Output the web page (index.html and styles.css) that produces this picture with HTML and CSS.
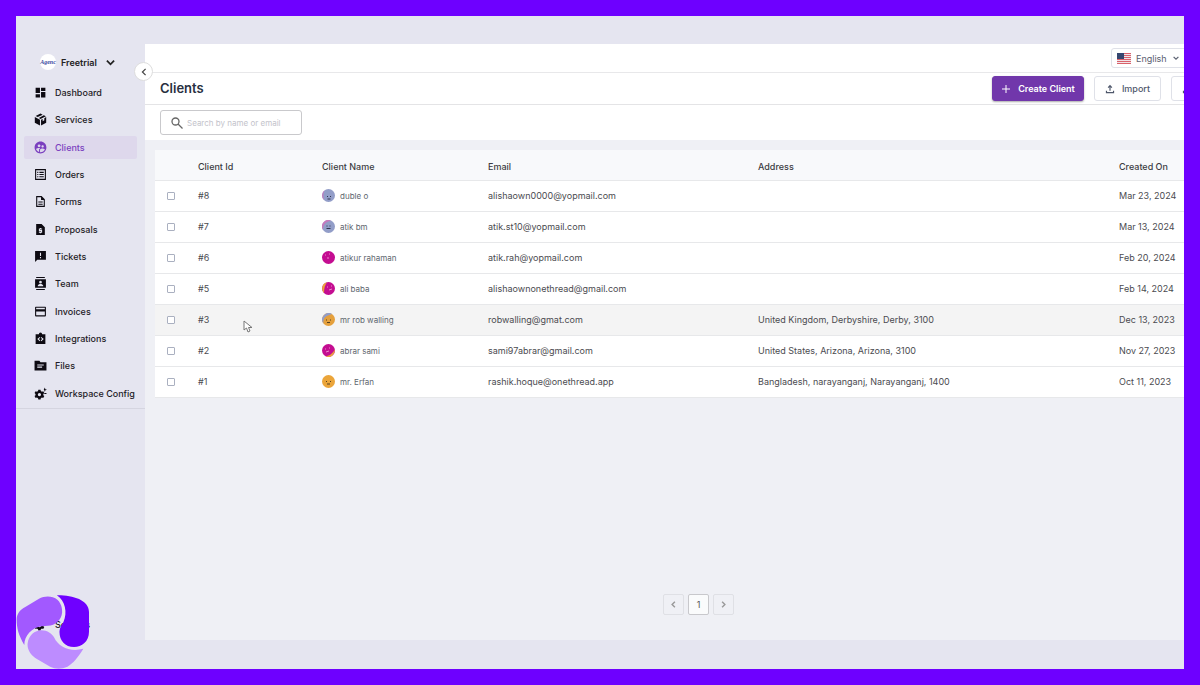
FILE: index.html
```html
<!DOCTYPE html>
<html lang="en">
<head>
<meta charset="utf-8">
<title>Clients</title>
<link rel="stylesheet" href="styles.css">
</head>
<body>
<svg class="defs" aria-hidden="true">
  <symbol id="upload" viewBox="0 0 24 24"><path d="M12 16V4m-4.500 4.500L12 4l4.500 4.500M3.500 16v4.500h17V16" fill="none" stroke="currentColor" stroke-width="2.800"/></symbol>
  <symbol id="gear" viewBox="0 0 24 24"><path fill-rule="evenodd" d="M8 5h4l.6 2.500 2 1.100 2.400-.8 2 3.400-1.800 1.800v2l1.800 1.800-2 3.400-2.400-.7-2 1.100L12 23H8l-.6-2.400-2-1.100-2.400.7-2-3.400L2.800 15v-2L1 11.200l2-3.400 2.400.8 2-1.100zM10 11a3 3 0 100 6 3 3 0 000-6z"/></symbol>
</svg>
<div class="app">
  <aside class="sidebar">
    <button class="workspace" type="button">
      <span class="brand">Agenc</span>
      <span>Freetrial</span>
      <svg class="caret" viewBox="0 0 10 10"><path d="M1 3l4 4 4-4"/></svg>
    </button>
    <nav class="nav">
      <a href="#"><svg viewBox="0 0 24 24"><path d="M3 3h8v10H3zM13 3h8v6h-8zM13 11h8v10h-8zM3 15h8v6H3z"/></svg>Dashboard</a>
      <a href="#"><svg viewBox="0 0 24 24"><path d="M12 1l4 2-9 4.500L3 5.500zM18 4l4 2-10 5-3-1.700zM1.500 7.500L11 12.500V23L1.500 18zM22.500 7.500V18L13 23V12.500l3-1.500v4l3-1.500v-4z"/></svg>Services</a>
      <a href="#" class="active" aria-current="page"><svg viewBox="1 1 22 22"><path d="M11.990 2c-5.520 0-10 4.480-10 10s4.480 10 10 10 10-4.480 10-10-4.480-10-10-10zm3.610 6.340c1.070 0 1.930.86 1.930 1.930s-.86 1.930-1.930 1.930-1.930-.86-1.930-1.930c-.01-1.070.86-1.930 1.930-1.930zm-6-1.580c1.300 0 2.360 1.060 2.360 2.360s-1.060 2.360-2.360 2.360-2.360-1.060-2.360-2.360c0-1.310 1.050-2.360 2.360-2.360zm0 9.130v3.750c-2.400-.75-4.300-2.600-5.140-4.960 1.050-1.120 3.670-1.690 5.140-1.690.53 0 1.200.08 1.900.22-1.640.87-1.900 2.020-1.900 2.680zM11.990 20c-.27 0-.53-.01-.79-.04v-4.070c0-1.420 2.940-2.130 4.400-2.130 1.070 0 2.920.39 3.840 1.150-1.170 2.970-4.060 5.090-7.450 5.090z"/></svg>Clients</a>
      <a href="#"><svg viewBox="0 0 24 24"><path fill-rule="evenodd" d="M2 2h20v20H2zm2 2v16h16V4z"/><path d="M6 7h2v2H6zm0 4h2v2H6zm0 4h2v2H6zM10 7h8v2h-8zm0 4h8v2h-8zm0 4h8v2h-8z"/></svg>Orders</a>
      <a href="#"><svg viewBox="0 0 24 24"><path fill-rule="evenodd" d="M4 2h10l6 6v14H4zm2 2v16h12V9h-5V4zm2 8h8v2H8zm0 4h8v2H8z"/></svg>Forms</a>
      <a href="#"><svg viewBox="0 0 24 24"><path fill-rule="evenodd" d="M4 2h10l6 6v14H4zm7 7v1H9v5h4v1H9v2h2v1h2v-1h2v-5h-4v-1h4v-2h-2V9z"/></svg>Proposals</a>
      <a href="#"><svg viewBox="0 0 24 24"><path fill-rule="evenodd" d="M2 2h20v16H6l-4 4zm9 3v6h2V5zm0 8v2h2v-2z"/></svg>Tickets</a>
      <a href="#"><svg viewBox="0 0 24 24"><path fill-rule="evenodd" d="M4 0h16v2H4zm-2 4h20v16H2zm10 3a2.500 2.500 0 100 5 2.500 2.500 0 000-5zm-5 10h10v-1c0-2-3-3-5-3s-5 1-5 3zM4 22h16v2H4z"/></svg>Team</a>
      <a href="#"><svg viewBox="0 0 24 24"><path fill-rule="evenodd" d="M3 3h18l1 1v16l-1 1H3l-1-1V4zm1 2v3h16V5zm0 7v7h16v-7z"/></svg>Invoices</a>
      <a href="#"><svg viewBox="0 0 24 24"><path fill-rule="evenodd" d="M3 4h6a3 3 0 016 0h6v18H3zm7.500 5L6 13l4.500 4 1-1.500L9 13l2.500-2.500zm3 0l-1 1.500L15 13l-2.500 2.500 1 1.500L18 13z"/></svg>Integrations</a>
      <a href="#"><svg viewBox="0 0 24 24"><path fill-rule="evenodd" d="M1 3h9l2 3h11v15H1zm5 7v2h12v-2zm0 4v2h9v-2z"/></svg>Files</a>
      <a href="#"><svg viewBox="0 0 24 24"><use href="#gear"/><path d="M18 5l2-4 1 3 3 1-3 1-1 3-1-3zM19 11h4v2h-4z"/></svg>Workspace Config</a>
    </nav>
    <a class="settings" href="#"><svg viewBox="0 0 24 24"><use href="#gear"/></svg>Settings</a>
    <button class="collapse" type="button" aria-label="Collapse sidebar"><svg viewBox="0 0 10 10"><path d="M7 1L3 5l4 4"/></svg></button>
    <svg class="swirl" viewBox="49 44 219 223" aria-hidden="true">
      <path fill="#6f00ff" d="M170 45C215 44 267 58 267 95V155C267 185 245 201 222 201C195 201 178 182 178 155C178 143 184 135 190 125C203 98 195 60 170 45Z"/>
      <path fill="#a259ff" d="M72 195C55 165 49 145 49 118C49 100 60 88 75 80L115 56C130 48 145 47 158 51C180 58 187 80 186 97C184 120 165 136 143 137L125 138C95 142 72 165 72 195Z"/>
      <path fill="#bd8cff" d="M82 190C85 165 103 150 124 150C142 150 155 160 162 172C175 200 210 217 250 206C235 230 220 250 202 260C185 268 165 268 150 260L110 237C93 227 80 210 82 190Z"/>
    </svg>
  </aside>
  <main class="main">
    <div class="topbar">
      <div class="language">
        <svg class="flag" viewBox="0 0 14 11"><path fill="#f1e4e8" d="M0 0h14v11H0z"/><path stroke="#d9616b" d="M0 .5h14M0 2.500h14M0 4.500h14M0 6.500h14M0 8.500h14M0 10.500h14"/><path fill="#35466f" d="M0 0h7v6H0z"/></svg>
        <select aria-label="Language"><option>English</option></select>
        <svg class="caret" viewBox="0 0 10 10"><path d="M1 3l4 4 4-4"/></svg>
      </div>
    </div>
    <header class="titlebar">
      <h1>Clients</h1>
      <div class="actions">
        <button class="btn primary" type="button"><svg viewBox="0 0 10 10"><path d="M5 1v8M1 5h8" stroke="currentColor"/></svg>Create Client</button>
        <button class="btn" type="button"><svg viewBox="0 0 24 24"><use href="#upload"/></svg>Import</button>
        <button class="btn export" type="button" aria-label="Export"><svg viewBox="0 0 24 24"><use href="#upload"/></svg></button>
      </div>
    </header>
    <div class="searchbar">
      <label class="search">
        <svg viewBox="0 0 12 12"><circle cx="4.500" cy="4.500" r="3.500"/><path d="M7 7l4.500 4.500"/></svg>
        <input type="search" placeholder="Search by name or email" aria-label="Search by name or email">
      </label>
    </div>
    <div class="content">
      <table>
        <colgroup><col class="c-check"><col class="c-id"><col class="c-name"><col class="c-email"><col class="c-address"><col></colgroup>
        <thead><tr><th></th><th>Client Id</th><th>Client Name</th><th>Email</th><th>Address</th><th>Created On</th></tr></thead>
        <tbody>
          <tr><td><input type="checkbox" aria-label="Select #8"></td><td>#8</td><td><span class="person"><svg viewBox="0 0 13 13"><circle cx="6.500" cy="6.500" r="6.500" fill="#929dc8"/><path fill="#c579bd" d="M3 1a6.500 6.500 0 00-1 10C1 7 1 4 3 1z"/><path stroke="#303650" d="M5 7.500h1M8 7.500h1M5.500 10h3"/></svg>duble o</span></td><td>alishaown0000@yopmail.com</td><td></td><td>Mar 23, 2024</td></tr>
          <tr><td><input type="checkbox" aria-label="Select #7"></td><td>#7</td><td><span class="person"><svg viewBox="0 0 13 13"><circle cx="6.500" cy="6.500" r="6.500" fill="#929dc8"/><path fill="#c579bd" d="M9 .5A6.500 6.500 0 001 10C1 5 3 2 9 .5z"/><path stroke="#303650" d="M4.500 6h1M7.500 6h1M4.500 8.500h4"/></svg>atik bm</span></td><td>atik.st10@yopmail.com</td><td></td><td>Mar 13, 2024</td></tr>
          <tr><td><input type="checkbox" aria-label="Select #6"></td><td>#6</td><td><span class="person"><svg viewBox="0 0 13 13"><circle cx="6.500" cy="6.500" r="6.500" fill="#c40d91"/><path stroke="#ed8acb" d="M3 4h1M7 3h1M5 7h2"/></svg>atikur rahaman</span></td><td>atik.rah@yopmail.com</td><td></td><td>Feb 20, 2024</td></tr>
          <tr><td><input type="checkbox" aria-label="Select #5"></td><td>#5</td><td><span class="person"><svg viewBox="0 0 13 13"><circle cx="6.500" cy="6.500" r="6.500" fill="#c40d91"/><path fill="#eba53a" d="M5 .2A6.500 6.500 0 002 11C2 6 3 3 5 .2z"/><path stroke="#ed8acb" d="M5 5h1M9 4h1M7 8l3-1"/></svg>ali baba</span></td><td>alishaownonethread@gmail.com</td><td></td><td>Feb 14, 2024</td></tr>
          <tr class="hover"><td><input type="checkbox" aria-label="Select #3"></td><td>#3</td><td><span class="person"><svg viewBox="0 0 13 13"><circle cx="6.500" cy="6.500" r="6.500" fill="#e5a03c"/><path fill="#929dc8" d="M10 1A6.500 6.500 0 001.500 10.500C1 5 3 3 10 1z"/><path stroke="#56401f" d="M4 7h1M8 7h1M5 9.500h3"/></svg>mr rob walling</span></td><td>robwalling@gmat.com</td><td>United Kingdom, Derbyshire, Derby, 3100</td><td>Dec 13, 2023</td></tr>
          <tr><td><input type="checkbox" aria-label="Select #2"></td><td>#2</td><td><span class="person"><svg viewBox="0 0 13 13"><circle cx="6.500" cy="6.500" r="6.500" fill="#c40d91"/><path fill="#eba53a" d="M12.800 5.500A6.500 6.500 0 013.500 12.200C8 12 11 9 12.800 5.500z"/><path stroke="#ed8acb" d="M3 5h1M7 4h1M4 8l3-1"/></svg>abrar sami</span></td><td>sami97abrar@gmail.com</td><td>United States, Arizona, Arizona, 3100</td><td>Nov 27, 2023</td></tr>
          <tr><td><input type="checkbox" aria-label="Select #1"></td><td>#1</td><td><span class="person"><svg viewBox="0 0 13 13"><circle cx="6.500" cy="6.500" r="6.500" fill="#eba53a"/><path stroke="#56401f" d="M4 6.500h1M8 6.500h1M5 9h3"/></svg>mr. Erfan</span></td><td>rashik.hoque@onethread.app</td><td>Bangladesh, narayanganj, Narayanganj, 1400</td><td>Oct 11, 2023</td></tr>
        </tbody>
      </table>
      <nav class="pager" aria-label="Pages">
        <button type="button" aria-label="Previous page"><svg viewBox="0 0 10 10"><path d="M7 1L3 5l4 4"/></svg></button>
        <button type="button" class="current">1</button>
        <button type="button" aria-label="Next page"><svg viewBox="0 0 10 10"><path d="M3 1l4 4-4 4"/></svg></button>
      </nav>
      <svg class="cursor" viewBox="0 0 10 13" aria-hidden="true"><path d="M1 1v9l2.500-2 1.500 4 2-1-1.500-3.500H9z"/></svg>
    </div>
  </main>
</div>
</body>
</html>
```
FILE: styles.css
```css
* { box-sizing: border-box; }
body { margin: 0; font-family: Inter, "Liberation Sans", sans-serif; font-size: 9px; color: #4b4b50; }
button, input, select { font: inherit; color: inherit; margin: 0; }
svg { display: block; flex: none; }
a { color: inherit; text-decoration: none; }
.defs { position: absolute; width: 0; height: 0; }
.app { display: flex; min-height: 100vh; border: 16px solid #6e00ff; background: #e5e5f0; overflow: hidden; }

.sidebar { position: relative; flex: none; width: 129px; display: flex; flex-direction: column; padding-top: 38px; color: #1e1b26; }
.workspace { display: flex; align-items: center; height: 16px; margin-left: 24px; padding: 0; border: 0; background: none; font-weight: 600; color: #222; }
.brand { display: grid; place-items: center; width: 16px; height: 16px; margin-right: 5px; border-radius: 50%; background: #fff; font: italic 700 6px "Liberation Serif", serif; color: #3a4aa0; }
.caret { width: 9px; height: 9px; margin-left: 9px; }
.caret path, .collapse path, .pager path { fill: none; stroke: currentColor; stroke-width: 2; }
.nav { display: flex; flex-direction: column; gap: 4px; height: 339px; padding: 11px 0 3px 8px; border-bottom: 1px solid #d5d5e0; }
.nav a, .settings { display: flex; align-items: center; gap: 8px; padding-left: 10px; font-weight: 500; white-space: nowrap; }
.nav a { flex: 1; margin-right: 8px; border-radius: 2px; }
.nav svg, .settings svg { width: 13px; height: 13px; fill: #0d0a12; }
.nav .active { background: #ded8ec; color: #7b3fbf; }
.nav .active svg { fill: #7b3fbf; }
.settings { margin: auto 0 37px 8px; height: 16px; }
.collapse { position: absolute; right: -8px; top: 46px; z-index: 2; display: grid; place-items: center; width: 19px; height: 19px; padding: 0; border: 1px solid #ddd; border-radius: 50%; background: #fff; color: #444; }
.collapse svg { width: 8px; height: 8px; }
.collapse path { stroke-width: 1.5; }
.swirl { position: absolute; left: 0; bottom: 0; width: 74px; height: 74px; }

.main { flex: 1; min-width: 0; display: flex; flex-direction: column; margin: 28px 0 29px; background: #eff0f5; overflow: hidden; }
.topbar, .titlebar, .searchbar { flex: none; display: flex; align-items: center; background: #fff; }
.topbar { height: 29px; justify-content: flex-end; border-bottom: 1px solid #e8e8ea; }
.language { position: relative; display: flex; align-items: center; flex: none; width: 77px; height: 20px; margin-right: -4px; }
.flag { position: absolute; left: 6px; width: 14px; height: 11px; }
.language select { appearance: none; width: 100%; height: 20px; padding: 0 0 0 24px; border: 1px solid #dfe1e8; border-radius: 3px; background: #fff; color: #5a6070; }
.language .caret { position: absolute; right: 9px; width: 6px; height: 6px; color: #5a6070; }
.titlebar { height: 32px; padding-left: 15px; justify-content: space-between; border-bottom: 1px solid #e4e4e6; }
h1 { margin: 0; padding-bottom: 1px; font-size: 13px; font-weight: 600; color: #283040; }
.actions { display: flex; gap: 10px; margin-right: -13px; }
.btn { display: flex; align-items: center; justify-content: center; gap: 7px; width: 67px; height: 25px; padding: 0; border: 1px solid #dfe1e8; border-radius: 3px; background: #fff; font-weight: 500; color: #4f586b; }
.btn svg { width: 10px; height: 10px; }
.export { justify-content: flex-start; width: 26px; padding-left: 10px; }
.primary { width: 92px; border-color: #7137ab; background: #7137ab; color: #fff; font-weight: 600; box-shadow: 0 1px 2px #0005; }
.searchbar { height: 35px; padding-left: 15px; }
.search { display: flex; align-items: center; gap: 4px; width: 142px; height: 25px; padding-left: 10px; border: 1px solid #c9c9cc; border-radius: 3px; }
.search svg { width: 12px; height: 12px; fill: none; stroke: #666; stroke-width: 1.300; }
.search input { flex: 1; min-width: 0; padding: 0; border: 0; outline: 0; background: none; font-size: 8px; }
.search input::placeholder { color: #c3c3cb; }

.content { position: relative; flex: 1; display: flex; flex-direction: column; padding: 10px 0 25px 10px; }
table { width: 100%; table-layout: fixed; border-collapse: collapse; background: #fff; }
.c-check { width: 43px; } .c-id { width: 124px; } .c-name { width: 166px; } .c-email { width: 270px; } .c-address { width: 361px; }
tr { height: 31px; border-bottom: 1px solid #e7e8ea; }
thead tr { height: 30px; }
th, td { padding: 0; text-align: left; white-space: nowrap; }
th { padding-top: 3px; background: #f8f9fb; font-weight: 500; color: #3c3c42; }
.hover { background: #f4f4f4; }
td input { appearance: none; display: block; width: 8px; height: 8px; margin-left: 12px; border: 1px solid #aab0c0; border-radius: 1px; background: #fff; }
.person { display: flex; align-items: center; gap: 5px; font-size: 8px; color: #60666e; }
.person svg { width: 13px; height: 13px; }
.pager { display: flex; justify-content: center; gap: 4px; margin-top: auto; padding-left: 58px; }
.pager button { display: grid; place-items: center; width: 21px; height: 21px; padding: 0; border: 1px solid #dfe0e5; border-radius: 2px; background: none; color: #999; }
.pager svg { width: 7px; height: 7px; }
.pager .current { border-color: #c8c8cc; background: #fafbfc; color: #555; }
.cursor { position: absolute; left: 98px; top: 180px; width: 10px; height: 13px; fill: #fff; stroke: #777; }
```
